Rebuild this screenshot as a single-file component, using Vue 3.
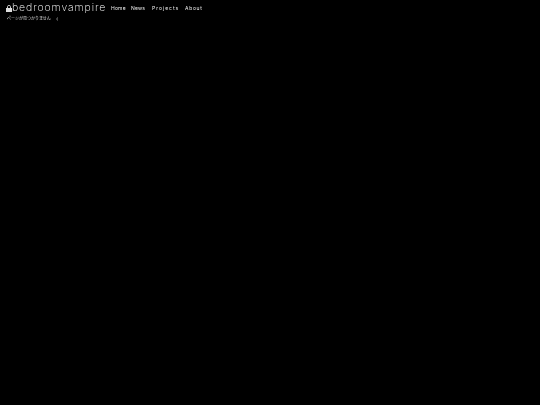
<script setup>
const links = ['Home', 'News', 'Projects', 'About']
</script>

<template>
  <div class="page">
    <header class="bar">
      <div class="brand">
        <svg class="lock" width="6" height="7" viewBox="0 0 6 7" aria-hidden="true">
          <path d="M1.500 3V1.500Q1.500 .5 3 .5T4.500 1.500V3" fill="none" stroke="#ccc" stroke-width="1" />
          <rect x="0" y="3" width="6" height="4" fill="#ddd" />
        </svg>
        <span class="title">bedroomvampire</span>
      </div>
      <nav class="nav">
        <a v-for="l in links" :key="l" class="link">{{ l }}</a>
      </nav>
    </header>
    <p class="msg">ページが見つかりません <span class="face">:(</span></p>
  </div>
</template>

<style>
html, body { margin: 0; background: #000; }
</style>

<style scoped>
.page {
  width: 540px;
  height: 405px;
  background: #000;
  color: #fff;
  font-family: Inter, sans-serif;
  overflow: hidden;
  box-sizing: border-box;
  padding: 2px 6px 0;
}
.bar { display: flex; align-items: center; height: 12px; }
.brand { display: flex; align-items: center; gap: 0; width: 105px; }
.lock { flex: none; }
.title {
  font-size: 10.500px;
  font-weight: 200;
  letter-spacing: 0.900px;
  line-height: 12px;
  color: #fff;
  will-change: opacity;
  white-space: nowrap;
}
.nav { display: grid; grid-template-columns: 20px 21px 33px auto; }
.link {
  font-size: 5px;
  font-weight: 400;
  letter-spacing: 0.200px;
  line-height: 8px;
  color: #eee;
  will-change: opacity;
}
.link:nth-child(3) { letter-spacing: 1px; }
.link:nth-child(4) { letter-spacing: 0.700px; }
.msg {
  margin: 1px 0 0 1px;
  font-family: "Noto Sans CJK JP", sans-serif;
  font-size: 4px;
  line-height: 6px;
  color: #ddd;
  will-change: opacity;
}
.face { margin-left: 4px; }
</style>
